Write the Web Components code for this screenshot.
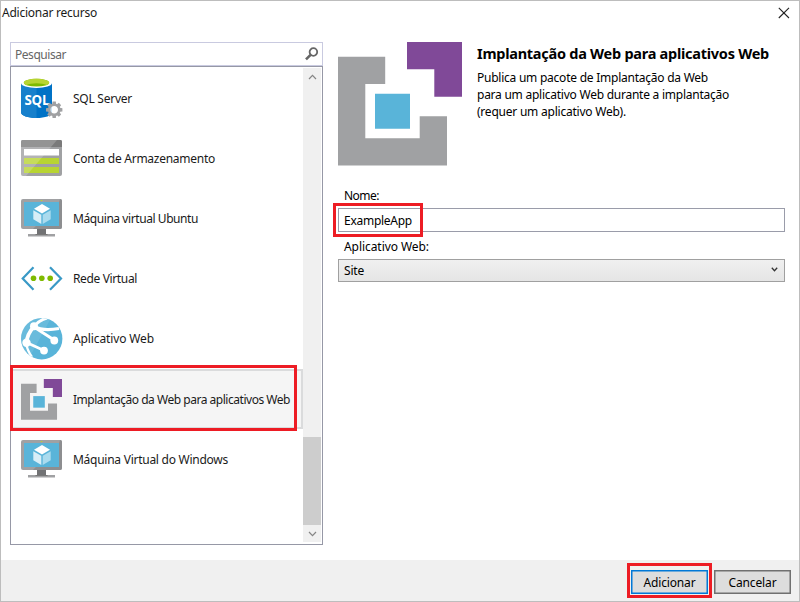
<!DOCTYPE html>
<html lang="pt-BR"><head><meta charset="utf-8"><title>Adicionar recurso</title>
<style>html,body{margin:0;width:800px;height:602px;overflow:hidden;background:#fff}</style></head>
<body><add-resource-dialog></add-resource-dialog>
<script>
const define=(name,html,init)=>customElements.define(name,class extends HTMLElement{
  constructor(){super();this.attachShadow({mode:'open'}).innerHTML=html}
  connectedCallback(){if(init)init(this,this.shadowRoot)}
});

/* Single line of text, tracked to fill the width given in w */
define('fit-text','<style>:host{display:block;white-space:pre;width:max-content}span{display:inline-block}</style><span><slot></slot></span>',(el,root)=>{
  const s=root.querySelector('span'),w=+el.getAttribute('w');
  s.style.letterSpacing=(w-s.getBoundingClientRect().width)/el.textContent.length+'px';
});

const deploy=`<path fill="#a0a1a3" d="M0 14.7H47.2V42H27.3V96.3H81.7V74.3H109V123.5H0Z"/><path fill="#804998" d="M69 0H124V54.7H96.3V27.3H69Z"/><path fill="#59b4d9" d="M37 51.7H72V86.7H37Z"/>`;
const monitor=`<path fill="#a0a1a3" d="M2 0H39Q41 0 41 2V28Q41 30 39 30H2Q0 30 0 28V2Q0 0 2 0Z"/><path fill="#8d8e90" d="M39 0Q41 0 41 2V28Q41 30 39 30H12L38 3Z"/><path fill="#59b4d9" d="M3 3H38V27H3Z"/><path fill="#b8d432" d="M19.8 1h1.5v1h-1.5z"/><path fill="#717274" d="M16 30H25V35H16Z"/><path fill="#a0a1a3" d="M7 35H34V37.5H7Z"/><path fill="#777" d="M15 35H26L27 36H14Z"/><path fill="#fff" d="M21 5L29 9.7 21 14.5 13 9.7Z"/><path fill="#d8eef7" d="M12.3 11.2L20.3 15.8V25L12.3 20.2Z"/><path fill="#aadbee" d="M29.7 11.2L21.7 15.8V25L29.7 20.2Z"/>`;
const icons={
 sql:['0 0 42 41',`<path fill="#0072c6" d="M0 5V34.5C0 37.5 7 40 15.5 40S31 37.5 31 34.5V5Z"/><path fill="#1780cc" d="M0 5V34.5C0 37.5 7 40 15.5 40V5Z"/><ellipse cx="15.5" cy="5" rx="15.5" ry="5" fill="#fff"/><ellipse cx="15.5" cy="4.7" rx="12.7" ry="3.9" fill="#7fba00"/><path fill="#b8d432" d="M5.5 7Q2.8 6 2.8 4.7C2.8 2.5 8.5.8 15.5.8S28.2 2.5 28.2 4.7Q28.2 6 25.5 7 22 5.3 15.5 5.3T5.5 7Z"/><text x="3.5" y="27.4" fill="#fff" font-family="Open Sans,sans-serif" font-weight="700" font-size="13.3" textLength="25">SQL</text><g transform="translate(33.2 31.8)"><circle r="5.1" fill="#fff" fill-opacity=".8" stroke="#a0a1a3" stroke-width="2.6"/><g fill="#a0a1a3">${[0,45,90,135,180,225,270,315].map(a=>`<path transform="rotate(${a})" d="M-1.6-8.2H1.6L2-5.5H-2Z"/>`).join('')}</g></g>`],
 storage:['0 0 41 36',`<path fill="#a0a1a3" d="M1.5 0H39.5Q41 0 41 1.5V34Q41 36 39 36H2Q0 36 0 34V1.5Q0 0 1.5 0Z"/><path fill="#7a7a7a" d="M1.5 0H39.5Q41 0 41 1.5V7H0V1.5Q0 0 1.5 0Z"/><path fill="#fff" d="M3 9H38V15.5H3Z"/><path fill="#b8d432" d="M3 18H38V24H3ZM3 27H38V33H3Z"/><path fill="#fff" fill-opacity=".2" d="M0 0H36L5 36H2Q0 36 0 34Z"/>`],
 vm:['0 0 41 38',monitor],
 net:['0 0 42 26',`<path fill="none" stroke="#3999c6" stroke-width="2.2" d="M12.5 1.2L1.7 12.5 12.5 23.7M29 1.2L40 12.5 29 23.7"/><g fill="#7fba00"><circle cx="12.5" cy="12.2" r="2.8"/><circle cx="20.8" cy="12.2" r="2.8"/><circle cx="29.2" cy="12.2" r="2.8"/></g>`],
 web:['0 0 42 42',`<clipPath id="c"><circle cx="20.7" cy="20.7" r="20.7"/></clipPath><g clip-path="url(#c)"><path fill="#59b4d9" d="M0 0H42V42H0Z"/><g fill="none" stroke="#fff"><path stroke-width="3.2" d="M13 8.5Q22 13.5 38 10.5"/><path stroke-width="3" d="M26 0Q18 2 13 8.5"/><path stroke-width="3.8" d="M13 8.5Q6 16 5.5 25"/><path stroke-width="3" d="M13 9L33.5 22.3M5.5 24.5L23 32.5"/><path stroke-width="2.2" d="M5 25Q6 32 11 39"/></g><g fill="#fff"><circle cx="13" cy="8.3" r="4"/><circle cx="5.5" cy="24.7" r="4.2"/><circle cx="33.3" cy="22.5" r="3.9"/><circle cx="23" cy="32.6" r="3.9"/></g><path fill="#fff" fill-opacity=".1" d="M0 0H30L7 42H0Z"/></g>`],
 deploy:['0 0 124 124',deploy],
 search:['0 0 14 14','<circle cx="8.4" cy="5" r="3.8" fill="none" stroke="#666" stroke-width="1.8"/><path stroke="#666" stroke-width="2.6" d="M5.6 7.8L1 12.4"/>'],
 close:['0 0 12 12','<path fill="none" stroke="#222" stroke-width="1.1" d="M.8.8L11 11M11 .8L.8 11"/>'],
 up:['0 0 9 6','<path fill="none" stroke="#858585" stroke-width="1.2" d="M1 5L4.5 1.3 8 5"/>'],
 down:['0 0 9 6','<path fill="none" stroke="#858585" stroke-width="1.2" d="M1 1L4.5 4.7 8 1"/>'],
 pick:['0 0 7 5','<path fill="none" stroke="#333" stroke-width="1.3" d="M.8 .8L3.5 3.8 6.2 .8"/>']
};
define('ui-icon','<style>:host{display:block;flex:none}svg{display:block;width:100%;height:100%}</style><svg></svg>',(el,root)=>{
  const [box,art]=icons[el.getAttribute('name')],s=root.querySelector('svg');
  s.setAttribute('viewBox',box);s.innerHTML=art;
  const [, ,w,h]=box.split(' ');el.style.width=(el.getAttribute('width')||w)+'px';el.style.height=(el.getAttribute('height')||h)+'px';
});

define('search-field',`<style>:host{display:flex;box-sizing:border-box;height:24px;border:1px solid #c9cae0;align-items:center;justify-content:space-between;padding:0 3px 0 4px;color:#666}ui-icon{margin-top:-1px}</style><slot></slot><ui-icon name="search"></ui-icon>`);
define('resource-item',`<style>:host{display:grid;grid-template-columns:41px 1fr;column-gap:11px;align-items:center;justify-items:start;box-sizing:border-box;height:60.2px;padding-left:9px;border:1px solid transparent;border-left:0}:host([selected]){background:#f5f5f5;border:2px solid #dadbdc;border-left:0}</style><slot name="icon"></slot><slot></slot>`);
define('scroll-bar',`<style>:host{display:flex;flex-direction:column;width:18px;background:#f0f0f0}.b{height:17px;display:grid;place-items:center}.track{flex:1;display:flex;align-items:end}.thumb{width:100%;height:88px;background:#cdcdcd}</style><div class="b"><ui-icon name="up"></ui-icon></div><div class="track"><div class="thumb"></div></div><div class="b"><ui-icon name="down"></ui-icon></div>`);
define('resource-list',`<style>:host{display:flex;box-sizing:border-box;height:479px;border:1px solid #9698a6;padding:1px 1px 2px 1px}</style><div style="flex:1"><slot></slot></div><scroll-bar></scroll-bar>`);
define('text-box',`<style>:host{display:flex;align-items:center;box-sizing:border-box;height:24px;border:1px solid #9a9caa;padding-left:5px;background:#fff}</style><slot></slot>`);
define('select-box',`<style>:host{display:flex;align-items:center;justify-content:space-between;box-sizing:border-box;height:23px;border:1px solid #a0a0a0;padding:0 6px 0 5px;background:linear-gradient(#f0f0f0,#e5e5e5)}ui-icon{margin-top:-2px}</style><slot></slot><ui-icon name="pick"></ui-icon>`);
define('push-button',`<style>:host{display:grid;place-items:center;box-sizing:border-box;width:77px;height:24px;border:1px solid #707070;background:#ddd;box-shadow:inset 0 0 0 .5px #707070}:host([primary]){border-color:#0078d7;box-shadow:inset 0 0 0 .5px #0078d7}</style><slot></slot>`);
define('callout-frame',`<style>:host{position:absolute;box-sizing:border-box;border:3px solid #ed1c24;pointer-events:none}</style>`);

define('add-resource-dialog',`<style>
:host{position:relative;display:grid;grid-template-rows:24px 1fr 41px;width:800px;height:602px;box-sizing:border-box;border:1px solid #bdbdbd;background:#fff;color:#1a1a1a;font:12px/17px "Noto Sans","Open Sans",sans-serif}
header{display:flex;justify-content:space-between;align-items:center;padding:0 9px 0 1px}
header fit-text{margin-top:-1px}
main{display:grid;grid-template-columns:313px 447px;column-gap:15px;padding:17px 0 0 9px;align-content:start}
.intro{display:grid;grid-template-columns:124px 1fr;column-gap:15px;height:145px;color:#000}
h1{font:bold 14.5px/20px "Noto Sans",sans-serif;margin:1px 0 6px}
.form{display:flex;flex-direction:column;color:#000}.label{padding-left:6px;height:21px}.label.second{margin-top:6px}
footer{display:flex;justify-content:flex-end;gap:6px;padding:10px 8px 0 0;background:#f0f0f0;color:#000}
</style>
<header><fit-text w="95">Adicionar recurso</fit-text><ui-icon name="close"></ui-icon></header>
<main><section><search-field><fit-text w="51">Pesquisar</fit-text></search-field><resource-list>
<resource-item><ui-icon slot="icon" name="sql"></ui-icon><fit-text w="59">SQL Server</fit-text></resource-item>
<resource-item><ui-icon slot="icon" name="storage"></ui-icon><fit-text w="142">Conta de Armazenamento</fit-text></resource-item>
<resource-item><ui-icon slot="icon" name="vm"></ui-icon><fit-text w="125">Máquina virtual Ubuntu</fit-text></resource-item>
<resource-item><ui-icon slot="icon" name="net"></ui-icon><fit-text w="64">Rede Virtual</fit-text></resource-item>
<resource-item><ui-icon slot="icon" name="web"></ui-icon><fit-text w="81">Aplicativo Web</fit-text></resource-item>
<resource-item selected><ui-icon slot="icon" name="deploy" width="41" height="41"></ui-icon><fit-text w="217">Implantação da Web para aplicativos Web</fit-text></resource-item>
<resource-item><ui-icon slot="icon" name="vm"></ui-icon><fit-text w="155">Máquina Virtual do Windows</fit-text></resource-item>
</resource-list></section>
<section><div class="intro"><ui-icon name="deploy"></ui-icon><div><h1><fit-text w="292">Implantação da Web para aplicativos Web</fit-text></h1><fit-text w="231">Publica um pacote de Implantação da Web</fit-text><fit-text w="252">para um aplicativo Web durante a implantação</fit-text><fit-text w="149">(requer um aplicativo Web).</fit-text></div></div>
<div class="form"><div class="label"><fit-text w="35">Nome:</fit-text></div><text-box><fit-text w="68">ExampleApp</fit-text></text-box><div class="label second"><fit-text w="85">Aplicativo Web:</fit-text></div><select-box><fit-text w="20">Site</fit-text></select-box></div></section></main>
<footer><push-button primary><fit-text w="52">Adicionar</fit-text></push-button><push-button><fit-text w="48">Cancelar</fit-text></push-button></footer>
<callout-frame style="left:9px;top:364px;width:287px;height:66px"></callout-frame>
<callout-frame style="left:332px;top:202px;width:90px;height:34px"></callout-frame>
<callout-frame style="left:626px;top:562px;width:85px;height:35px"></callout-frame>`);
</script></body></html>
